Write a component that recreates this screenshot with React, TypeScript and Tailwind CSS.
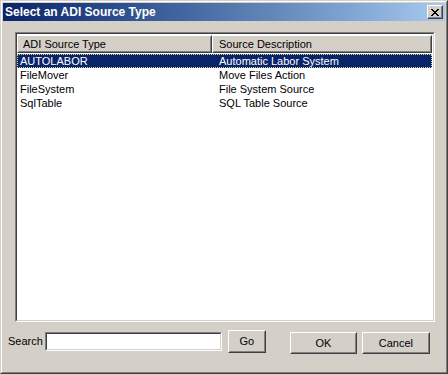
import React from "react";

const rows = [
  { t: "AUTOLABOR", d: "Automatic Labor System" },
  { t: "FileMover", d: "Move Files Action" },
  { t: "FileSystem", d: "File System Source" },
  { t: "SqlTable", d: "SQL Table Source" },
];

function Raised({ className = "", children }: { className?: string; children?: React.ReactNode }) {
  return (
    <div className={`border border-t-white border-l-white border-b-[#404040] border-r-[#404040] bg-[#d4d0c8] ${className}`}>
      <div className="w-full h-full border border-t-[#d4d0c8] border-l-[#d4d0c8] border-b-[#808080] border-r-[#808080] flex items-center justify-center">
        {children}
      </div>
    </div>
  );
}

export default function App() {
  return (
    <div
      className="w-[448px] h-[374px] bg-[#d4d0c8] border border-t-[#d4d0c8] border-l-[#d4d0c8] border-b-[#404040] border-r-[#404040] text-[11px] text-black"
      style={{ fontFamily: '"Liberation Sans", Arial, sans-serif' }}
    >
      <div className="w-full h-full border border-t-white border-l-white border-b-[#808080] border-r-[#808080] p-px flex flex-col">
        {/* Title bar */}
        <div className="h-[18px] flex items-center justify-between pl-[2px] pr-[2px] bg-gradient-to-r from-[#0a246a] to-[#a6caf0]">
          <span className="text-white font-bold text-[12px] leading-none">Select an ADI Source Type</span>
          <Raised className="w-[16px] h-[14px]">
            <svg width="8" height="7" viewBox="0 0 8 7" shapeRendering="crispEdges">
              <path
                d="M0 0h2v1H0zM6 0h2v1H6zM1 1h2v1H1zM5 1h2v1H5zM2 2h4v1H2zM3 3h2v1H3zM2 4h4v1H2zM1 5h2v1H1zM5 5h2v1H5zM0 6h2v1H0zM6 6h2v1H6z"
                fill="#000"
              />
            </svg>
          </Raised>
        </div>

        {/* Body */}
        <div className="flex-1 flex flex-col pt-[11px] pl-[12px] pr-[10px]">
          {/* List view */}
          <div className="h-[290px] border border-t-[#808080] border-l-[#808080] border-b-white border-r-white">
            <div className="w-full h-full border border-t-[#404040] border-l-[#404040] border-b-[#d4d0c8] border-r-[#d4d0c8] bg-white flex flex-col">
              <div className="flex h-[18px] shrink-0 mt-[1px]">
                <Raised className="w-[195px] h-full">
                  <span className="w-full pl-[4px] leading-none">ADI Source Type</span>
                </Raised>
                <Raised className="w-[220px] h-full">
                  <span className="w-full pl-[5px] leading-none">Source Description</span>
                </Raised>
              </div>
              <div className="flex flex-col mt-[1px]">
                {rows.map((r, i) => (
                  <div
                    key={r.t}
                    className={`flex h-[14px] w-[415px] items-center leading-none ${
                      i === 0 ? "bg-[#0a246a] text-white outline-1 outline-dotted outline-[#d8d8a0] -outline-offset-1" : ""
                    }`}
                  >
                    <span className="w-[195px] pl-[3px]">{r.t}</span>
                    <span className="pl-[7px]">{r.d}</span>
                  </div>
                ))}
              </div>
            </div>
          </div>

          {/* Bottom row */}
          <div className="flex items-start mt-[8px]">
            <span className="-ml-[7px] mt-[6px] leading-none">Search</span>
            <div className="ml-[2px] mt-[2px] w-[177px] h-[19px] border border-t-[#808080] border-l-[#808080] border-b-white border-r-white">
              <div className="w-full h-full border border-t-[#404040] border-l-[#404040] border-b-[#d4d0c8] border-r-[#d4d0c8] bg-white" />
            </div>
            <Raised className="ml-[6px] w-[38px] h-[23px]">
              <span className="leading-none">Go</span>
            </Raised>
            <Raised className="ml-[24px] mt-[2px] w-[67px] h-[22px]">
              <span className="leading-none">OK</span>
            </Raised>
            <Raised className="ml-[5px] mt-[2px] w-[68px] h-[22px]">
              <span className="leading-none">Cancel</span>
            </Raised>
          </div>
        </div>
      </div>
    </div>
  );
}
